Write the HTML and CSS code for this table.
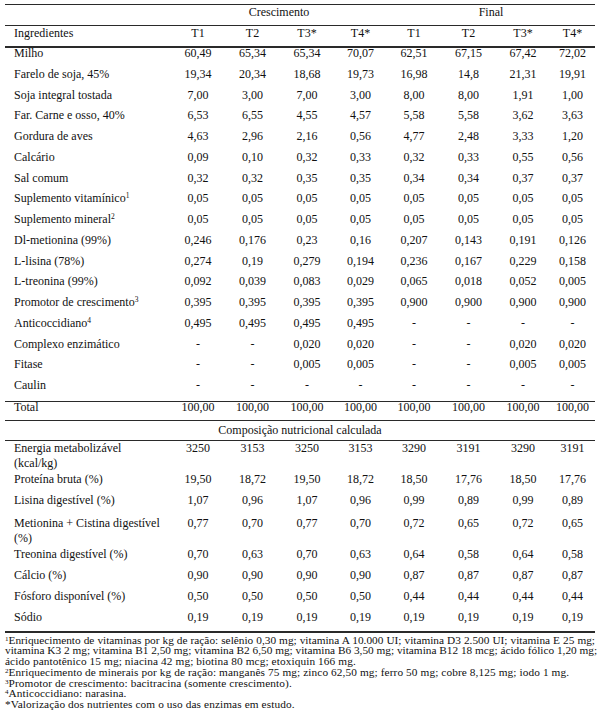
FILE: index.html
```html
<!DOCTYPE html>
<html lang="pt">
<head>
<meta charset="utf-8">
<title>Composição das rações</title>
<link rel="stylesheet" href="styles.css">
</head>
<body>
<div class="tbl">
  <div class="row hd hd1">
    <span class="n"></span>
    <span class="grp grp-a">Crescimento</span>
    <span class="grp grp-b">Final</span>
  </div>
  <div class="row hd hd2">
    <span class="n">Ingredientes</span>
    <span class="c">T1</span><span class="c">T2</span><span class="c">T3*</span><span class="c">T4*</span>
    <span class="c">T1</span><span class="c">T2</span><span class="c">T3*</span><span class="c">T4*</span>
  </div>

  <div class="row up first">
    <span class="n">Milho</span>
    <span class="c">60,49</span><span class="c">65,34</span><span class="c">65,34</span><span class="c">70,07</span>
    <span class="c">62,51</span><span class="c">67,15</span><span class="c">67,42</span><span class="c">72,02</span>
  </div>
  <div class="row up">
    <span class="n">Farelo de soja, 45%</span>
    <span class="c">19,34</span><span class="c">20,34</span><span class="c">18,68</span><span class="c">19,73</span>
    <span class="c">16,98</span><span class="c">14,8</span><span class="c">21,31</span><span class="c">19,91</span>
  </div>
  <div class="row up">
    <span class="n">Soja integral tostada</span>
    <span class="c">7,00</span><span class="c">3,00</span><span class="c">7,00</span><span class="c">3,00</span>
    <span class="c">8,00</span><span class="c">8,00</span><span class="c">1,91</span><span class="c">1,00</span>
  </div>
  <div class="row up">
    <span class="n">Far. Carne e osso, 40%</span>
    <span class="c">6,53</span><span class="c">6,55</span><span class="c">4,55</span><span class="c">4,57</span>
    <span class="c">5,58</span><span class="c">5,58</span><span class="c">3,62</span><span class="c">3,63</span>
  </div>
  <div class="row up">
    <span class="n">Gordura de aves</span>
    <span class="c">4,63</span><span class="c">2,96</span><span class="c">2,16</span><span class="c">0,56</span>
    <span class="c">4,77</span><span class="c">2,48</span><span class="c">3,33</span><span class="c">1,20</span>
  </div>
  <div class="row up">
    <span class="n">Calcário</span>
    <span class="c">0,09</span><span class="c">0,10</span><span class="c">0,32</span><span class="c">0,33</span>
    <span class="c">0,32</span><span class="c">0,33</span><span class="c">0,55</span><span class="c">0,56</span>
  </div>
  <div class="row up">
    <span class="n">Sal comum</span>
    <span class="c">0,32</span><span class="c">0,32</span><span class="c">0,35</span><span class="c">0,35</span>
    <span class="c">0,34</span><span class="c">0,34</span><span class="c">0,37</span><span class="c">0,37</span>
  </div>
  <div class="row up">
    <span class="n">Suplemento vitamínico<sup class="sup">1</sup></span>
    <span class="c">0,05</span><span class="c">0,05</span><span class="c">0,05</span><span class="c">0,05</span>
    <span class="c">0,05</span><span class="c">0,05</span><span class="c">0,05</span><span class="c">0,05</span>
  </div>
  <div class="row up">
    <span class="n">Suplemento mineral<sup class="sup">2</sup></span>
    <span class="c">0,05</span><span class="c">0,05</span><span class="c">0,05</span><span class="c">0,05</span>
    <span class="c">0,05</span><span class="c">0,05</span><span class="c">0,05</span><span class="c">0,05</span>
  </div>
  <div class="row up">
    <span class="n">Dl-metionina (99%)</span>
    <span class="c">0,246</span><span class="c">0,176</span><span class="c">0,23</span><span class="c">0,16</span>
    <span class="c">0,207</span><span class="c">0,143</span><span class="c">0,191</span><span class="c">0,126</span>
  </div>
  <div class="row up">
    <span class="n">L-lisina (78%)</span>
    <span class="c">0,274</span><span class="c">0,19</span><span class="c">0,279</span><span class="c">0,194</span>
    <span class="c">0,236</span><span class="c">0,167</span><span class="c">0,229</span><span class="c">0,158</span>
  </div>
  <div class="row up">
    <span class="n">L-treonina (99%)</span>
    <span class="c">0,092</span><span class="c">0,039</span><span class="c">0,083</span><span class="c">0,029</span>
    <span class="c">0,065</span><span class="c">0,018</span><span class="c">0,052</span><span class="c">0,005</span>
  </div>
  <div class="row up">
    <span class="n">Promotor de crescimento<sup class="sup">3</sup></span>
    <span class="c">0,395</span><span class="c">0,395</span><span class="c">0,395</span><span class="c">0,395</span>
    <span class="c">0,900</span><span class="c">0,900</span><span class="c">0,900</span><span class="c">0,900</span>
  </div>
  <div class="row up">
    <span class="n">Anticoccidiano<sup class="sup">4</sup></span>
    <span class="c">0,495</span><span class="c">0,495</span><span class="c">0,495</span><span class="c">0,495</span>
    <span class="c">-</span><span class="c">-</span><span class="c">-</span><span class="c">-</span>
  </div>
  <div class="row up">
    <span class="n">Complexo enzimático</span>
    <span class="c">-</span><span class="c">-</span><span class="c">0,020</span><span class="c">0,020</span>
    <span class="c">-</span><span class="c">-</span><span class="c">0,020</span><span class="c">0,020</span>
  </div>
  <div class="row up">
    <span class="n">Fitase</span>
    <span class="c">-</span><span class="c">-</span><span class="c">0,005</span><span class="c">0,005</span>
    <span class="c">-</span><span class="c">-</span><span class="c">0,005</span><span class="c">0,005</span>
  </div>
  <div class="row up">
    <span class="n">Caulin</span>
    <span class="c">-</span><span class="c">-</span><span class="c">-</span><span class="c">-</span>
    <span class="c">-</span><span class="c">-</span><span class="c">-</span><span class="c">-</span>
  </div>
  <div class="row total">
    <span class="n">Total</span>
    <span class="c">100,00</span><span class="c">100,00</span><span class="c">100,00</span><span class="c">100,00</span>
    <span class="c">100,00</span><span class="c">100,00</span><span class="c">100,00</span><span class="c">100,00</span>
  </div>
  <div class="row comp">
    <span class="full">Composição nutricional calculada</span>
  </div>

  <div class="row lo dbl">
    <span class="n">Energia metabolizável<br>(kcal/kg)</span>
    <span class="c">3250</span><span class="c">3153</span><span class="c">3250</span><span class="c">3153</span>
    <span class="c">3290</span><span class="c">3191</span><span class="c">3290</span><span class="c">3191</span>
  </div>
  <div class="row lo">
    <span class="n">Proteína bruta (%)</span>
    <span class="c">19,50</span><span class="c">18,72</span><span class="c">19,50</span><span class="c">18,72</span>
    <span class="c">18,50</span><span class="c">17,76</span><span class="c">18,50</span><span class="c">17,76</span>
  </div>
  <div class="row lo tall">
    <span class="n">Lisina digestível (%)</span>
    <span class="c">1,07</span><span class="c">0,96</span><span class="c">1,07</span><span class="c">0,96</span>
    <span class="c">0,99</span><span class="c">0,89</span><span class="c">0,99</span><span class="c">0,89</span>
  </div>
  <div class="row lo dbl">
    <span class="n">Metionina + Cistina digestível<br>(%)</span>
    <span class="c">0,77</span><span class="c">0,70</span><span class="c">0,77</span><span class="c">0,70</span>
    <span class="c">0,72</span><span class="c">0,65</span><span class="c">0,72</span><span class="c">0,65</span>
  </div>
  <div class="row lo">
    <span class="n">Treonina digestível (%)</span>
    <span class="c">0,70</span><span class="c">0,63</span><span class="c">0,70</span><span class="c">0,63</span>
    <span class="c">0,64</span><span class="c">0,58</span><span class="c">0,64</span><span class="c">0,58</span>
  </div>
  <div class="row lo">
    <span class="n">Cálcio (%)</span>
    <span class="c">0,90</span><span class="c">0,90</span><span class="c">0,90</span><span class="c">0,90</span>
    <span class="c">0,87</span><span class="c">0,87</span><span class="c">0,87</span><span class="c">0,87</span>
  </div>
  <div class="row lo">
    <span class="n">Fósforo disponível (%)</span>
    <span class="c">0,50</span><span class="c">0,50</span><span class="c">0,50</span><span class="c">0,50</span>
    <span class="c">0,44</span><span class="c">0,44</span><span class="c">0,44</span><span class="c">0,44</span>
  </div>
  <div class="row lo last">
    <span class="n">Sódio</span>
    <span class="c">0,19</span><span class="c">0,19</span><span class="c">0,19</span><span class="c">0,19</span>
    <span class="c">0,19</span><span class="c">0,19</span><span class="c">0,19</span><span class="c">0,19</span>
  </div>
</div>

<div class="notes">
  <span class="ln just"><sup class="fsup">1</sup>Enriquecimento de vitaminas por kg de ração: selênio 0,30 mg; vitamina A 10.000 UI; vitamina D3 2.500 UI; vitamina E 25 mg;</span>
  <span class="ln just">vitamina K3 2 mg; vitamina B1 2,50 mg; vitamina B2 6,50 mg; vitamina B6 3,50 mg; vitamina B12 18 mcg; ácido fólico 1,20 mg;</span>
  <span class="ln">ácido pantotênico 15 mg; niacina 42 mg; biotina 80 mcg; etoxiquin 166 mg.</span>
  <span class="ln"><sup class="fsup">2</sup>Enriquecimento de minerais por kg de ração: manganês 75 mg; zinco 62,50 mg; ferro 50 mg; cobre 8,125 mg; iodo 1 mg.</span>
  <span class="ln"><sup class="fsup">3</sup>Promotor de crescimento: bacitracina (somente crescimento).</span>
  <span class="ln"><sup class="fsup">4</sup>Anticoccidiano: narasina.</span>
  <span class="ln">*Valorização dos nutrientes com o uso das enzimas em estudo.</span>
</div>
</body>
</html>
```

FILE: styles.css
```css
html, body {
  margin: 0;
  padding: 0;
  background: #ffffff;
}

body {
  font-family: "Liberation Serif", "Times New Roman", serif;
  color: #111111;
  font-size: 12px;
}

.tbl {
  width: 590px;
  margin: 4px 5px 0;
}

.row {
  display: grid;
  grid-template-columns: 166px 54px 55px 54px 53px 54px 55px 54px 45px;
  box-sizing: content-box;
}

.n {
  padding-left: 9px;
  white-space: nowrap;
}

.c {
  text-align: center;
  white-space: nowrap;
}

.hd {
  height: 20px;
  line-height: 15px;
  border-top: 1px solid #2a2a2a;
}

.grp {
  text-align: center;
}

.grp-a {
  grid-column: 2 / span 4;
}

.grp-b {
  grid-column: 6 / span 4;
}

.up {
  height: 20.76px;
  line-height: 11px;
}

.up.first {
  border-top: 2px solid #2a2a2a;
}

.total {
  height: 18px;
  line-height: 11px;
  border-top: 1px solid #2a2a2a;
  border-bottom: 1px solid #2a2a2a;
}

.comp {
  height: 17px;
  padding-top: 2px;
  line-height: 15px;
  border-bottom: 1px solid #2a2a2a;
}

.full {
  grid-column: 1 / -1;
  text-align: center;
}

.lo {
  height: 21px;
  line-height: 15px;
}

.lo.tall {
  height: 23px;
}

.lo.dbl {
  height: 31px;
}

.lo.last {
  border-bottom: 2px solid #2a2a2a;
}

.sup {
  font-size: 7.5px;
  vertical-align: 4px;
  line-height: 0;
}

.notes {
  width: 590px;
  margin: 2px 5px 0;
  font-size: 11.3px;
  letter-spacing: 0.1px;
  line-height: 10.7px;
}

.ln {
  display: block;
  white-space: nowrap;
}

.ln.just {
  white-space: nowrap;
  text-align: justify;
  text-align-last: justify;
  letter-spacing: 0;
}

.fsup {
  font-size: 7px;
  vertical-align: 3.5px;
  line-height: 0;
}
```
